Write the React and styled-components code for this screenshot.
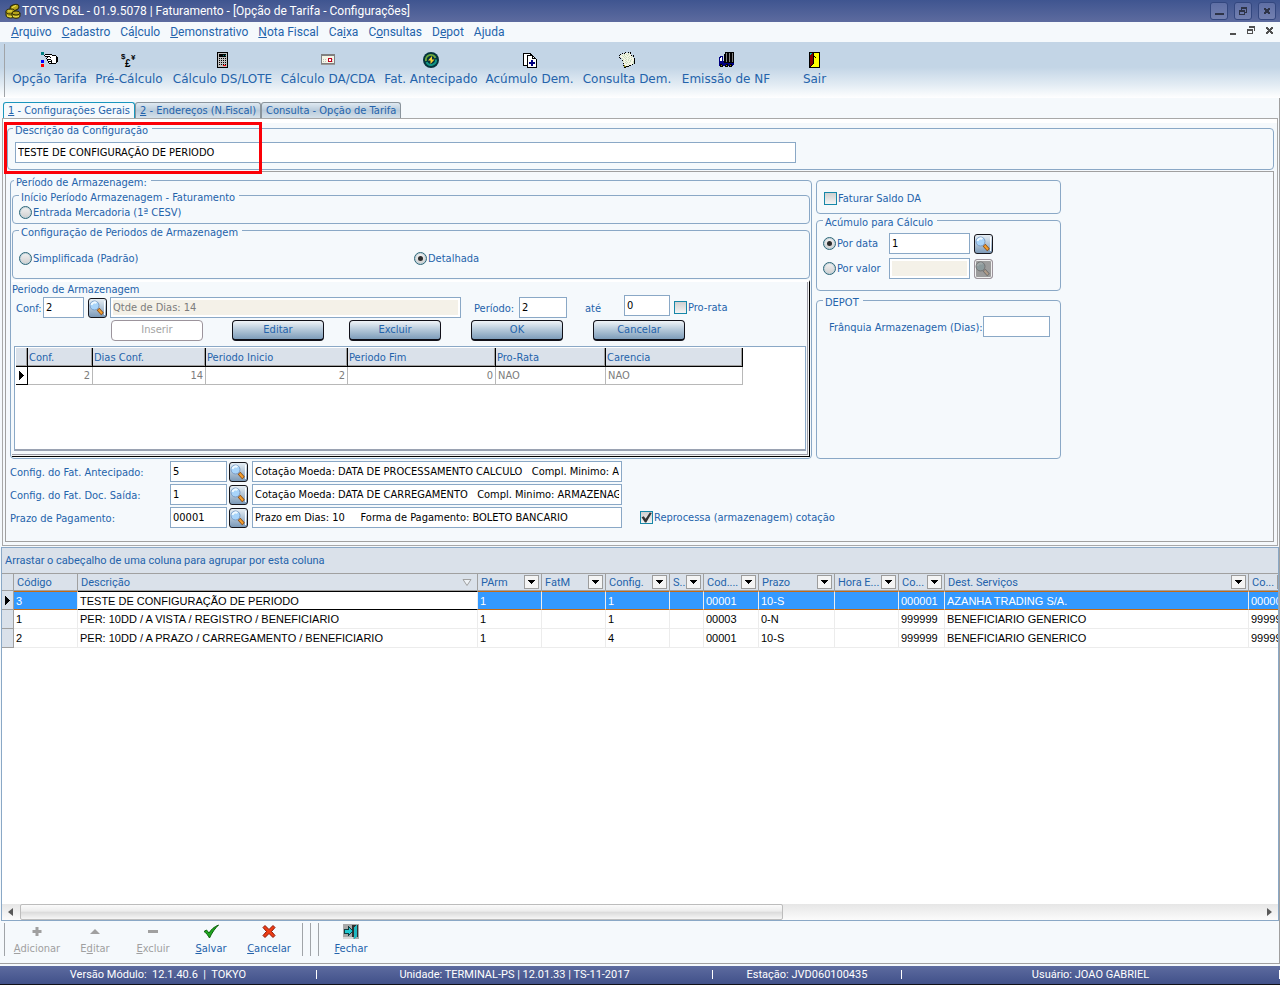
// src/App.jsx
import React, { useState } from 'react';
import styled, { createGlobalStyle, css } from 'styled-components';

const uiFont = `'DejaVu Sans Condensed', 'Noto Sans', sans-serif`;
const gridFont = `Roboto, 'Liberation Sans', sans-serif`;
const cellFont = `'Liberation Sans', Roboto, sans-serif`;
const captionFont = `Roboto, 'Noto Sans', sans-serif`;

const GlobalStyle = createGlobalStyle`
  * {
    box-sizing: border-box;
  }

  body {
    margin: 0;
    background-color: #f5f9fc;
    font-family: ${uiFont};
    font-size: 11px;
    color: #2463ab;
  }

  button, input {
    font: inherit;
    color: inherit;
    margin: 0;
  }
`;

const AppWindow = styled.div`
  display: flex;
  flex-direction: column;
  min-height: 100vh;
  border-bottom: 1px solid #101018;
`;

// Title bar
const TitleBar = styled.header`
  display: flex;
  align-items: center;
  height: 22px;
  padding: 0 4px 0 5px;
  gap: 6px;
  background: linear-gradient(#3f5590, #5d6b9f);
`;

const Title = styled.h1`
  flex: 1;
  display: flex;
  align-items: center;
  gap: 1px;
  margin: 0;
  font-family: ${captionFont};
  font-size: 12px;
  font-weight: 400;
  color: #fff;
  white-space: nowrap;
`;

const CaptionButton = styled.button`
  width: 18px;
  height: 18px;
  padding: 0;
  display: grid;
  place-items: center;
  border: 1px solid #33477f;
  border-radius: 3px;
  background: linear-gradient(#5f6fa5, #7380b0);
`;

// Menu
const MenuBar = styled.nav`
  display: flex;
  align-items: center;
  justify-content: space-between;
  height: 20px;
  padding: 0 4px 0 11px;
`;

const MenuList = styled.div`
  display: flex;
  gap: 10px;
`;

const MenuLink = styled.a`
  font-family: ${captionFont};
  font-size: 12px;
  line-height: 18px;
  color: #2463ab;
  text-decoration: none;
  white-space: nowrap;
`;

const MdiButtons = styled.div`
  display: flex;
  gap: 4px;
`;

const MdiButton = styled.button`
  width: 14px;
  height: 18px;
  padding: 0;
  border: none;
  background: none;
`;

// Toolbar
const Toolbar = styled.div`
  display: flex;
  align-items: stretch;
  height: 56px;
  padding: 2px 0 1px 4px;
  background: linear-gradient(#c3d5e6 45%, #e1ebf3 75%, #ffffff);
`;

const Grip = styled.span`
  width: 1px;
  margin-left: ${(props) => props.$before || 0}px;
  margin-right: ${(props) => props.$gap || 0}px;
  background-color: #a0a4a8;
`;

const ToolButton = styled.button`
  width: ${(props) => props.$width}px;
  display: flex;
  flex-direction: column;
  align-items: center;
  gap: 3px;
  padding: 8px 0 0;
  border: none;
  background: none;
  font-family: 'DejaVu Sans', sans-serif;
  font-size: 12px;
  line-height: 16px;
  white-space: nowrap;
`;

// Tabs
const Workspace = styled.main`
  flex: 1;
  display: flex;
  flex-direction: column;
  min-width: 0;
  border-right: 1px solid #a0a0a0;
`;

const TabList = styled.div`
  display: flex;
  align-items: flex-end;
  height: 20px;
  padding-left: 3px;
`;

const Tab = styled.button`
  height: 16px;
  padding: 1px 4px 0;
  border: 1px solid #8a949c;
  border-bottom: none;
  border-radius: 3px 3px 0 0;
  background: linear-gradient(#dfe9f1, #b9cbdb 50%, #d5e1ea);
  line-height: 14px;
  white-space: nowrap;

  ${(props) =>
    props.$active &&
    css`
      border-color: #1996bd;
      background: #f5f9fc;
    `}
`;

const TabPanel = styled.section`
  margin: 0 1px 1px 2px;
  padding: 3px 3px 3px 2px;
  border: 1px solid #a8a8a8;
  background: linear-gradient(#ffffff 4px, #f5f9fc 4px);
`;

const InnerPanel = styled.div`
  margin-top: 1px;
  padding: 2px 4px 13px;
  border: 1px solid #a0a0a0;
`;

// Group box
const Group = styled.fieldset`
  min-width: 0;
  margin: 0;
  padding: 0;
  border: 1px solid #8aa8c6;
  border-radius: 4px;
`;

const Legend = styled.legend`
  margin-left: ${(props) => props.$indent || 0}px;
  padding: 4px 4px 0 2px;
  line-height: 9px;
`;

const DescriptionGroup = styled(Group)`
  position: relative;
  margin-left: 2px;
  padding: 7px 7px 6px;
`;

const Highlight = styled.div`
  position: absolute;
  left: -4px;
  top: -13px;
  width: 258px;
  height: 52px;
  border: 3px solid #fb0007;
  pointer-events: none;
`;

const Columns = styled.div`
  display: flex;
  gap: 4px;
`;

const StorageGroup = styled(Group)`
  flex: 0 1 802px;
  padding: 2px 1px 1px;
`;

const RadioGroup = styled(Group)`
  display: flex;
  padding: ${(props) => props.$padding};
`;

const SideColumn = styled.div`
  flex: 0 0 245px;
  display: flex;
  flex-direction: column;
  padding-top: 6px;
`;

const InvoiceGroup = styled(Group)`
  height: 34px;
  padding: 11px 7px;
`;

const AccrualGroup = styled(Group)`
  padding: 6px 6px 11px;
`;

const DepotGroup = styled(Group)`
  flex: 1;
  margin-top: 3px;
  padding: 9px 6px 0;
`;

// Fields
const TextInput = styled.input`
  flex: 0 1 auto;
  min-width: 0;
  width: ${(props) => props.$width}px;
  height: 21px;
  padding: 0 2px;
  border: 1px solid #8aa8c6;
  border-radius: 0;
  outline: none;
  background-color: #fff;
  color: #000;

  &:disabled {
    border-color: #8aa8c6;
    background-color: #f4f1e8;
    box-shadow: inset 0 0 0 2px #fff;
    color: #7c7c7c;
  }
`;

const choice = css`
  appearance: none;
  flex: none;
  display: grid;
  place-items: center;
  width: 13px;
  height: 13px;
  outline: none;
`;

const Radio = styled.input`
  ${choice}
  border: 1px solid #2b6577;
  border-radius: 50%;
  background: linear-gradient(#f2f2f2, #cfcfcf);
  box-shadow: 0 0 0 1px #c3d3da inset;

  &:checked::before {
    content: '';
    width: 5px;
    height: 5px;
    border-radius: 50%;
    background-color: #2c2c2c;
  }
`;

const Check = styled.input`
  ${choice}
  border: 1px solid #1687a8;
  background: linear-gradient(#cfcfcf, #f4f4f4);

  &:checked::before {
    content: '';
    width: 11px;
    height: 11px;
    background-color: #333;
    clip-path: polygon(5% 48%, 25% 38%, 42% 62%, 80% 5%, 98% 8%, 48% 96%, 36% 96%);
  }
`;

const ChoiceLabel = styled.label`
  display: flex;
  align-items: center;
  gap: 1px;
  width: ${(props) => (props.$width ? `${props.$width}px` : 'auto')};
  margin-left: ${(props) => props.$indent || 0}px;
  line-height: 13px;
  white-space: nowrap;
`;

const FieldLabel = styled.label`
  flex: none;
  width: ${(props) => props.$width}px;
  padding-top: 2px;
  line-height: 17px;
  white-space: nowrap;
`;

const FieldStack = styled.div`
  display: flex;
  flex-direction: column;
  gap: ${(props) => props.$gap}px;
`;

const FieldRow = styled.div`
  display: flex;
  align-items: center;
  gap: ${(props) => props.$gap || 0}px;
  padding-left: ${(props) => props.$indent || 0}px;
`;

const LookupGap = styled.div`
  display: flex;
  margin-left: 4px;
`;

const LookupButton = styled.button`
  flex: none;
  width: 19px;
  height: 20px;
  padding: 0;
  border: 1px solid #16161c;
  border-radius: 3px;
  background: linear-gradient(#e6eef4, #7c9ab8);
  line-height: 0;

  &:disabled {
    border-color: #9c949c;
    background: #9c9c9c;
    box-shadow: inset 0 0 0 1px #f0f0f0;
  }
`;

// Storage period editor
const PeriodPanel = styled.div`
  margin-top: 1px;
  padding: 2px 3px 4px 0;
  border-top: 2px solid #fff;
  border-right: 1px solid #000;
  border-bottom: 1px solid #000;
  box-shadow: inset -1px -1px #f4f4f4, inset -2px -2px #9c9ca6;
`;

const PanelTitle = styled.div`
  line-height: 11px;
`;

const PeriodRow = styled.div`
  display: flex;
  align-items: flex-end;
  height: 23px;
  padding-left: 4px;
`;

const PeriodItem = styled.div`
  display: flex;
  align-items: center;
  align-self: ${(props) => (props.$raised ? 'flex-start' : 'flex-end')};
  gap: ${(props) => props.$gap || 0}px;
  height: 21px;
  margin-left: ${(props) => props.$indent || 0}px;
  min-width: 0;
`;

const ButtonRow = styled.div`
  display: grid;
  grid-template-columns: 121px 117px 122px 122px auto;
  margin: 2px 0 5px;
  padding-left: 99px;
`;

const ActionButton = styled.button`
  width: 92px;
  height: 21px;
  padding: 0 0 2px;
  border: 1px solid #101018;
  border-bottom-width: 2px;
  border-radius: 4px;
  background: linear-gradient(#f0f4f8, #b8cbdb 45%, #7e9dba);
  line-height: 17px;

  &:disabled {
    border: 1px solid #9c949c;
    background: #fff;
    color: #a4a4a4;
  }
`;

const PeriodTableBox = styled.div`
  min-height: 105px;
  margin: 0 0 1px 2px;
  padding: 1px;
  border: 1px solid #8aa8c6;
  border-bottom: 2px solid #9aa2b2;
  background-color: #fff;
  overflow: hidden;
`;

const PeriodTable = styled.table`
  width: 727px;
  table-layout: fixed;
  border-collapse: separate;
  border-spacing: 0;

  th,
  td {
    height: 19px;
    padding: 1px 1px 0;
    font-weight: 400;
    line-height: 16px;
    text-align: left;
    white-space: nowrap;
  }

  th {
    border-right: 1px solid #000;
    border-bottom: 1px solid #000;
    background-color: #dae1ea;
    box-shadow: inset -1px -1px #a0a0a0;
  }

  td {
    height: 18px;
    padding: 0 2px;
    border-right: 1px solid #b8b8b8;
    border-bottom: 1px solid #b8b8b8;
    color: #7c7c7c;
  }

  td:first-child {
    padding: 0 3px;
    border-right: 1px solid #000;
    border-bottom: 1px solid #000;
    line-height: 0;
  }

  td.number {
    text-align: right;
  }
`;

const BottomFields = styled.div`
  margin-top: 2px;
`;

// Options grid
const GridBox = styled.section`
  flex: 1;
  display: flex;
  flex-direction: column;
  min-width: 0;
  margin-left: 1px;
  border: 1px solid #8aa8c6;
  background-color: #fff;
  font-family: ${gridFont};
`;

const GroupBand = styled.div`
  padding: 0 3px;
  background-color: #dae1ea;
  line-height: 25px;
`;

const GridScroll = styled.div`
  flex: 1;
  overflow: hidden;
`;

const OptionTable = styled.table`
  width: 1293px;
  table-layout: fixed;
  border-collapse: separate;
  border-spacing: 0;
`;

const HeaderCell = styled.th`
  height: 18px;
  padding: 0 2px 0 3px;
  border-top: 1px solid #a0a0a0;
  border-bottom: 1px solid #a0a0a0;
  border-right: 1px solid #a0a0a0;
  background-color: #dae1ea;
  font-weight: 400;
  text-align: left;
  white-space: nowrap;
`;

const HeaderContent = styled.div`
  display: flex;
  align-items: center;
  justify-content: space-between;
  height: 16px;
`;

const FilterButton = styled.button`
  flex: none;
  display: grid;
  place-items: center;
  width: 15px;
  height: 14px;
  padding: 0;
  border: 1px solid #9c9c9c;
  background-color: #f4f4f4;
`;

const BodyCell = styled.td`
  height: 19px;
  padding: 0 2px;
  border-right: 1px solid #ececec;
  border-bottom: 1px solid #ececec;
  font-family: ${cellFont};
  color: #000;
  line-height: 16px;
  white-space: nowrap;

  ${(props) =>
    props.$selected &&
    css`
      border-top: 1px solid #c46a14;
      border-bottom: 1px solid #c46a14;
      background-color: #3399ff;
      color: #fff;
    `}

  ${(props) =>
    props.$focused &&
    css`
      border-top-color: #000;
      border-bottom-color: #000;
      background-color: #fff;
      color: #000;
    `}
`;

const IndicatorCell = styled.td`
  padding: 0 0 0 3px;
  border-right: 1px solid #a0a0a0;
  border-bottom: 1px solid #a0a0a0;
  background-color: #dae1ea;
  line-height: 0;
`;

const ScrollBar = styled.div`
  display: flex;
  align-items: stretch;
  height: 16px;
  background: linear-gradient(#e6e6e6, #fbfbfb);
`;

const ScrollArrow = styled.button`
  width: 17px;
  padding: 0;
  border: none;
  background: none;
`;

const ScrollTrack = styled.div`
  flex: 1;
  display: grid;
  grid-template-columns: 8fr 5fr;
  padding: 0 1px;
`;

const ScrollThumb = styled.div`
  border: 1px solid #bcbcbc;
  border-radius: 2px;
  background: linear-gradient(#fbfbfb, #ececec 45%, #dadada 50%, #f6f6f6);
`;

// Footer
const ActionBar = styled.div`
  display: flex;
  height: 43px;
  padding: 2px 0 7px 4px;
  border-bottom: 1px solid #a0a0a0;
`;

const CrudButton = styled.button`
  width: 58px;
  display: flex;
  flex-direction: column;
  align-items: center;
  gap: 2px;
  padding: 1px 0 0;
  border: none;
  background: none;
  line-height: 15px;

  &:disabled {
    color: #a0a0a0;
  }
`;

const StatusBar = styled.footer`
  display: grid;
  grid-template-columns: 317fr 396fr 189fr 378fr;
  height: 18px;
  margin-top: 2px;
  background: linear-gradient(#5d6b9f, #41518a);
  font-family: ${gridFont};
  color: #fff;
`;

const StatusCell = styled.div`
  display: flex;
  align-items: center;
  padding-bottom: 1px;
  text-align: center;
  line-height: 17px;
  white-space: pre;

  span {
    flex: 1;
  }

  &::after {
    content: '';
    width: 1px;
    height: 9px;
    background-color: #fff;
  }
`;

// Icons
function PixelIcon({ rows, colors }) {
  const width = Math.max(...rows.map((row) => row.length));
  return (
    <svg width={width} height={rows.length} shapeRendering="crispEdges" aria-hidden="true">
      {rows.map((row, y) =>
        [...row].map((key, x) =>
          colors[key] ? <rect key={`${x}-${y}`} x={x} y={y} width="1" height="1" fill={colors[key]} /> : null
        )
      )}
    </svg>
  );
}

const palette = {
  K: '#000000',
  W: '#ffffff',
  T: '#008080',
  B: '#0000ff',
  R: '#ff0000',
  N: '#000080',
  G: '#808080',
  L: '#c0c0c0',
  Y: '#ffff00',
  M: '#800000',
  C: '#00c0c0',
  P: '#f4f4e4',
  E: '#c8dcc0',
  O: '#8a8a20',
  D: '#505050',
  S: '#2e3448',
  X: '#9a9a9a',
  Q: '#c00020',
};

const pixelRows = {
  hand: [
    'TTT',
    'TTT',
    'TTT.KKKKKKK',
    '...KWWWWWWWKKKK',
    '....KKKKKWWWWWWK',
    '......KWWKWWWWWKK',
    '.....KWWWWWWWWWKK',
    '......KKKKWWWWWKK',
    'BBB...KWWWKWWWWKK',
    'BBB....KKKKWWWWKK',
    'BBB....KWWKWWWWK',
    '........KKKKKKK',
    'RRR',
    'RRR',
    'RRR',
    '',
  ],
  calculator: [
    'KKKKKKKKKKK',
    'KLLLLLLLLLK',
    'KLKKKKKKKLK',
    'KLKKKKTKTLK',
    'KLKKKKKKKLK',
    'KLLLLLLLLLK',
    'KLKLKLKLKLK',
    'KLLLLLLLLLK',
    'KLKLKLKLKLK',
    'KLLLLLLLLLK',
    'KLKLKLKLKLK',
    'KLLLLLLLLLK',
    'KLKLKLKLKLK',
    'KLLLLLRRRLK',
    'KLLLLLLLLLK',
    'KKKKKKKKKKK',
  ],
  calendar: [
    '',
    '',
    'GGGGGGGGGGGGGG',
    'GGGGGGGGGGGGGG',
    'GPPPPPPPPPPPPG',
    'GPPPPPPPPPPPPG',
    'GPPPPPPQQQQPPG',
    'GPLPLPPQWWQLPG',
    'GPPPPPPQWWQPPG',
    'GPLPLPPQQQQLPG',
    'GPPPPPPPPPPPPG',
    'GGGGGGGGGGGGGG',
    'XXXXXXXXXXXXXX',
    '',
    '',
    '',
  ],
  documents: [
    '',
    'KKKKKKKK',
    'KWWWWWWKK',
    'KWWWKKKKKK',
    'KWWWKWWWWKK',
    'KWWWKWWWWKWK',
    'KWWWKWWWWKKKK',
    'KWWWKWWWWWWWWK',
    'KWWWKWWWNNWWWK',
    'KWWWKWWWNNWWWK',
    'KWWWKWNNNNNNWK',
    'KWWWKWNNNNNNWK',
    'KWWWKWWWNNWWWK',
    'KKKKKWWWNNWWWK',
    '....KWWWWWWWWK',
    '....KKKKKKKKKK',
  ],
  paper: [
    '......K..K.K',
    '...K.KPPPEPK',
    '.K.PPEPEPEPP',
    'KPPEPEPPEPPPK.K',
    '.PPPEPEPPPEPPEK',
    'K.PPPEPEPEPPEP.',
    '.K.EPPEPPPEPPPPK',
    '...PEPPEPEPPEPPK',
    '...KPPEPPEPEPPPK',
    '....EPPEPPPEPPEK',
    '....PPEPEPEPPPEK',
    '....KPPEPPPPPPEK',
    '.....PPPPEPPPK',
    '....KOPPPPKK',
    '.....OOKKK',
    '.....KK',
  ],
  truck: [
    '......KKKKKKKKK',
    '......KGKKGKKGK',
    '.....KKGKKGKKGK',
    '.....KKGKKGKKGK',
    '.NNN.KKGKKGKKGK',
    'NNWN.KKGKKGKKGK',
    'NWWN.KKGKKGKKGK',
    'NWWN.KKGKKGKKGK',
    'NWWN.KKGKKGKKGK',
    'NNNNNKKGKKGKKGK',
    'NNNNNKKKKKKKKKK',
    'NNNNNNNNNNNNNNN',
    'NKKNNNNKKNNKKNN',
    'NKOKNNKOKNKOKN',
    '.KKK..KKK.KKK',
    '',
  ],
  door: [
    'KKKKKKKKKKK',
    'KCCMKYYYYYK',
    'KCMMKYYYYYK',
    'KMMMKYYYYYK',
    'KMMMKKYYYYK',
    'KMMMKYKYYYK',
    'KMMMKYYYYYK',
    'KMMMKYYYYYK',
    'KMMMKYYYYYK',
    'KMMMKYYYYYK',
    'KMMMKYYYYYK',
    'KMMMKYYYYYK',
    'KMMKYYYYYYK',
    'KMKYYYYYYYK',
    'KKYYYYYYYYK',
    'KKKKKKKKKKK',
  ],
  arrow: ['K', 'KK', 'KKK', 'KKKK', 'KKKKK', 'KKKK', 'KKK', 'KK', 'K'],
  drop: ['KKKKKKK', '.KKKKK', '..KKK', '...K'],
  minimize: ['', '', '', '', '', '', 'SSSSSSSSS', 'SSSSSSSSS'],
  restore: ['..SSSSSS', '..SSSSSS', '..S....S', 'SSSSSS.S', 'SSSSSS.S', 'S....SSS', 'S....S', 'SSSSSS'],
  close: ['SS..SS', 'SSSSSS', '.SSSS', '.SSSS', 'SSSSSS', 'SS..SS'],
  mdiMinimize: ['', '', '', '', 'DDDDDD', 'DDDDDD', ''],
  mdiRestore: ['..DDDDDD', '..DDDDDD', '.......D', 'DDDDDD.D', 'DDDDDD.D', 'D....D', 'D....D', 'DDDDDD', '', ''],
  mdiClose: ['DD...DD', 'DDD.DDD', '.DDDDD', '..DDD', '.DDDDD', 'DDD.DDD', 'DD...DD', '', ''],
};

const Pixel = ({ name }) => <PixelIcon rows={pixelRows[name]} colors={palette} />;

const CoinsIcon = () => (
  <svg width="16" height="16" viewBox="0 0 16 16" aria-hidden="true">
    <g fill="#b5a31a" stroke="#2c2a06">
      <ellipse cx="9.500" cy="4.500" rx="4.500" ry="3" transform="rotate(-20 9.500 4.500)" />
      <path d="M1 8.500V12c0 4 9 4 9 0V8.500z" />
      <ellipse cx="5.500" cy="8.500" rx="4.500" ry="2.500" />
      <path d="M7 10v3c0 3 8 3 8 0v-3z" />
      <ellipse cx="11" cy="10" rx="4" ry="2" />
    </g>
    <path d="M2 12.500c2 1.500 4 1.500 5 1M8 13c2 1.200 4 1 6 0M7 4.500l4-2M3 8h4" stroke="#f4ea50" fill="none" />
  </svg>
);

const MoneyIcon = () => (
  <svg width="16" height="16" viewBox="0 0 16 16" fill="#000" fontFamily="Liberation Sans" fontWeight="700" aria-hidden="true">
    <text x="0" y="7" fontSize="8">$</text>
    <text x="4" y="15" fontSize="10">£</text>
    <text x="10" y="8" fontSize="8">¥</text>
  </svg>
);

const CycleIcon = () => (
  <svg width="16" height="16" viewBox="0 0 16 16" aria-hidden="true">
    <circle cx="8" cy="8" r="8" fill="#04343c" />
    <path d="M3 9a5 5 0 0 1 9.500-3" stroke="#6aa83c" strokeWidth="2" fill="none" />
    <path d="M13 7.500a5 5 0 0 1-9.500 2.500" stroke="#129484" strokeWidth="2" fill="none" />
    <circle cx="8" cy="8" r="3.500" fill="#04343c" />
    <path d="M9 4L5 8.500h2.500V12L11.500 7.500H9z" fill="#f8d030" />
  </svg>
);

const SearchIcon = ({ muted }) => (
  <svg width="17" height="18" viewBox="0 0 17 18" aria-hidden="true">
    {!muted && <path d="M15.500 2v14" stroke="#fff" />}
    <path d="M9 10l4.500 5" stroke={muted ? '#6c6c6c' : '#8a4a10'} strokeWidth="3.500" />
    <path d="M9.500 10.500l3.500 4" stroke={muted ? '#b09c88' : '#f4a030'} strokeWidth="2" />
    <circle cx="5.500" cy="6.500" r="4.500" fill={muted ? '#8c9a9c' : '#a8d4fa'} stroke={muted ? '#747474' : '#7c9cc4'} />
    <path d="M2.500 6a3.200 3.200 0 0 1 5-2" stroke={muted ? '#a0a8a8' : '#f0faff'} strokeWidth="2" fill="none" />
  </svg>
);

const PlusIcon = () => (
  <svg width="16" height="15" viewBox="0 0 16 15" aria-hidden="true">
    <path d="M8 3v9M3.500 7.500h9" stroke="#a0a0a0" strokeWidth="3" />
  </svg>
);

const UpIcon = () => (
  <svg width="16" height="15" viewBox="0 0 16 15" aria-hidden="true">
    <path d="M8 5l5 5H3z" fill="#a0a0a0" />
  </svg>
);

const MinusIcon = () => (
  <svg width="16" height="15" viewBox="0 0 16 15" aria-hidden="true">
    <path d="M3 7.500h10" stroke="#a0a0a0" strokeWidth="3" />
  </svg>
);

const SaveIcon = () => (
  <svg width="16" height="15" viewBox="0 0 16 15" aria-hidden="true">
    <path d="M1 7.500L3.500 6 6 9C8.500 5 11 3 15.500 1 12 4.500 9 8.500 6.500 14 5 11.500 3.500 9 1 7.500z" fill="#1fa81f" stroke="#0c600c" />
  </svg>
);

const CancelIcon = () => (
  <svg width="16" height="15" viewBox="0 0 16 15" aria-hidden="true">
    <path
      d="M4 1.500l4 4 4-4 2 2-3.500 4L14 11.500l-2 2-4-4-4 4-2-2 3.500-4L2 3.500z"
      fill="#ee3c14"
      stroke="#8c1404"
    />
  </svg>
);

const ExitIcon = () => (
  <svg width="16" height="15" viewBox="0 0 16 15" shapeRendering="crispEdges" aria-hidden="true">
    <path d="M0 0h16v15H0z" fill="#a8a8a8" />
    <path d="M9 1h6v12H9z" fill="#303030" />
    <path d="M11 3l3-2v12l-3 2z" fill="#20b8c0" />
    <path d="M0 13h10v2H0z" fill="#d8d8d8" />
    <path d="M1 5h4V2l5 5-5 5V9H1z" fill="#20c8d0" stroke="#103c40" />
  </svg>
);

const SortIcon = () => (
  <svg width="16" height="7" viewBox="0 0 16 7" aria-hidden="true">
    <path d="M4 .5h8L8 6.500z" fill="#eef2f6" stroke="#a0a0a0" />
  </svg>
);

const ScrollIcon = ({ right }) => (
  <svg width="5" height="8" viewBox="0 0 5 8" aria-hidden="true">
    <path d={right ? 'M0 0l5 4-5 4z' : 'M5 0L0 4l5 4z'} fill="#585858" />
  </svg>
);

// "_" before a letter marks its access key
function Mnemonic({ text }) {
  const at = text.indexOf('_');
  if (at < 0) return <span>{text}</span>;
  return (
    <span>
      {text.slice(0, at)}
      <u>{text[at + 1]}</u>
      {text.slice(at + 2)}
    </span>
  );
}

const menus = [
  '_Arquivo',
  '_Cadastro',
  'Cá_lculo',
  '_Demonstrativo',
  '_Nota Fiscal',
  'Ca_ixa',
  'C_onsultas',
  'D_epot',
  'A_juda',
];

const tools = [
  { label: 'Opção Tarifa', width: 83, icon: <Pixel name="hand" /> },
  { label: 'Pré-Cálculo', width: 76, icon: <MoneyIcon /> },
  { label: 'Cálculo DS/LOTE', width: 111, icon: <Pixel name="calculator" /> },
  { label: 'Cálculo DA/CDA', width: 100, icon: <Pixel name="calendar" /> },
  { label: 'Fat. Antecipado', width: 106, icon: <CycleIcon /> },
  { label: 'Acúmulo Dem.', width: 91, icon: <Pixel name="documents" /> },
  { label: 'Consulta Dem.', width: 104, icon: <Pixel name="paper" /> },
  { label: 'Emissão de NF', width: 94, icon: <Pixel name="truck" /> },
  { label: 'Sair', width: 83, icon: <Pixel name="door" /> },
];

const tabs = ['_1 - Configurações Gerais', '_2 - Endereços (N.Fiscal)', 'Consulta - Opção de Tarifa'];

const columns = [
  { label: 'Código', width: 64, plain: true },
  { label: 'Descrição', width: 400, sorted: true, plain: true },
  { label: 'PArm', width: 64 },
  { label: 'FatM', width: 64 },
  { label: 'Config.', width: 64 },
  { label: 'S..', width: 34 },
  { label: 'Cod....', width: 55 },
  { label: 'Prazo', width: 76 },
  { label: 'Hora E...', width: 64 },
  { label: 'Co...', width: 46 },
  { label: 'Dest. Serviços', width: 304 },
  { label: 'Co...', width: 46 },
];

const options = [
  ['3', 'TESTE DE CONFIGURAÇÃO DE PERIODO', '1', '', '1', '', '00001', '10-S', '', '000001', 'AZANHA TRADING S/A.', '000001'],
  ['1', 'PER: 10DD / A VISTA / REGISTRO / BENEFICIARIO', '1', '', '1', '', '00003', '0-N', '', '999999', 'BENEFICIARIO GENERICO', '999999'],
  ['2', 'PER: 10DD / A PRAZO / CARREGAMENTO / BENEFICIARIO', '1', '', '4', '', '00001', '10-S', '', '999999', 'BENEFICIARIO GENERICO', '999999'],
];

const crud = [
  { label: '_Adicionar', icon: <PlusIcon />, disabled: true },
  { label: 'E_ditar', icon: <UpIcon />, disabled: true },
  { label: '_Excluir', icon: <MinusIcon />, disabled: true },
  { label: '_Salvar', icon: <SaveIcon /> },
  { label: '_Cancelar', icon: <CancelIcon /> },
];

const lookups = [
  { id: 'antecipado', label: 'Config. do Fat. Antecipado:', code: '5', text: 'Cotação Moeda: DATA DE PROCESSAMENTO CALCULO   Compl. Minimo: ARMAZENAGEM' },
  { id: 'saida', label: 'Config. do Fat. Doc. Saída:', code: '1', text: 'Cotação Moeda: DATA DE CARREGAMENTO   Compl. Minimo: ARMAZENAGEM' },
  { id: 'prazo', label: 'Prazo de Pagamento:', code: '00001', text: 'Prazo em Dias: 10     Forma de Pagamento: BOLETO BANCARIO' },
];

function PeriodEditor() {
  return (
    <PeriodPanel>
      <PanelTitle>Periodo de Armazenagem</PanelTitle>
      <PeriodRow>
        <PeriodItem>
          <FieldLabel $width={27} htmlFor="conf">Conf:</FieldLabel>
          <TextInput id="conf" $width={41} defaultValue="2" />
        </PeriodItem>
        <PeriodItem $indent={4} $gap={3}>
          <LookupButton type="button" aria-label="Pesquisar configuração"><SearchIcon /></LookupButton>
          <TextInput aria-label="Quantidade de dias" $width={351} disabled defaultValue="Qtde de Dias: 14" />
        </PeriodItem>
        <PeriodItem $indent={13}>
          <FieldLabel $width={45} htmlFor="from">Período:</FieldLabel>
          <TextInput id="from" $width={48} defaultValue="2" />
        </PeriodItem>
        <PeriodItem $indent={18}>
          <FieldLabel $width={39} htmlFor="to">até</FieldLabel>
        </PeriodItem>
        <PeriodItem $raised>
          <TextInput id="to" $width={46} defaultValue="0" />
        </PeriodItem>
        <PeriodItem $indent={4}>
          <ChoiceLabel>
            <Check type="checkbox" />
            Pro-rata
          </ChoiceLabel>
        </PeriodItem>
      </PeriodRow>
      <ButtonRow>
        <ActionButton type="button" disabled>Inserir</ActionButton>
        <ActionButton type="button">Editar</ActionButton>
        <ActionButton type="button">Excluir</ActionButton>
        <ActionButton type="button">OK</ActionButton>
        <ActionButton type="button">Cancelar</ActionButton>
      </ButtonRow>
      <PeriodTableBox>
        <PeriodTable>
          <colgroup>
            {[12, 65, 113, 142, 148, 110, 137].map((width, i) => (
              <col key={i} width={width} />
            ))}
          </colgroup>
          <thead>
            <tr>
              <th aria-label="Atual" />
              {['Conf.', 'Dias Conf.', 'Periodo Inicio', 'Periodo Fim', 'Pro-Rata', 'Carencia'].map((label) => (
                <th key={label}>{label}</th>
              ))}
            </tr>
          </thead>
          <tbody>
            <tr>
              <td><Pixel name="arrow" /></td>
              <td className="number">2</td>
              <td className="number">14</td>
              <td className="number">2</td>
              <td className="number">0</td>
              <td>NAO</td>
              <td>NAO</td>
            </tr>
          </tbody>
        </PeriodTable>
      </PeriodTableBox>
    </PeriodPanel>
  );
}

function OptionGrid() {
  const [selected, setSelected] = useState(0);

  return (
    <GridBox>
      <GroupBand>Arrastar o cabeçalho de uma coluna para agrupar por esta coluna</GroupBand>
      <GridScroll>
        <OptionTable>
          <colgroup>
            <col width="12" />
            {columns.map((column, i) => (
              <col key={i} width={column.width} />
            ))}
          </colgroup>
          <thead>
            <tr>
              <HeaderCell aria-label="Atual" />
              {columns.map((column, i) => (
                <HeaderCell key={i}>
                  <HeaderContent>
                    {column.label}
                    {column.sorted && <SortIcon />}
                    {!column.plain && (
                      <FilterButton type="button" aria-label={`Filtrar ${column.label}`}>
                        <Pixel name="drop" />
                      </FilterButton>
                    )}
                  </HeaderContent>
                </HeaderCell>
              ))}
            </tr>
          </thead>
          <tbody>
            {options.map((row, r) => (
              <tr key={row[0]} onClick={() => setSelected(r)}>
                <IndicatorCell>{selected === r && <Pixel name="arrow" />}</IndicatorCell>
                {row.map((value, c) => (
                  <BodyCell key={c} $selected={selected === r} $focused={selected === r && c === 1}>
                    {value}
                  </BodyCell>
                ))}
              </tr>
            ))}
          </tbody>
        </OptionTable>
      </GridScroll>
      <ScrollBar>
        <ScrollArrow type="button" aria-label="Rolar para a esquerda"><ScrollIcon /></ScrollArrow>
        <ScrollTrack>
          <ScrollThumb />
        </ScrollTrack>
        <ScrollArrow type="button" aria-label="Rolar para a direita"><ScrollIcon right /></ScrollArrow>
      </ScrollBar>
    </GridBox>
  );
}

function App() {
  const [tab, setTab] = useState(0);

  return (
    <AppWindow>
      <GlobalStyle />
      <TitleBar>
        <Title>
          <CoinsIcon />
          TOTVS D&amp;L - 01.9.5078 | Faturamento - [Opção de Tarifa - Configurações]
        </Title>
        <CaptionButton type="button" aria-label="Minimizar"><Pixel name="minimize" /></CaptionButton>
        <CaptionButton type="button" aria-label="Restaurar"><Pixel name="restore" /></CaptionButton>
        <CaptionButton type="button" aria-label="Fechar"><Pixel name="close" /></CaptionButton>
      </TitleBar>
      <MenuBar>
        <MenuList>
          {menus.map((menu) => (
            <MenuLink key={menu} href="#">
              <Mnemonic text={menu} />
            </MenuLink>
          ))}
        </MenuList>
        <MdiButtons>
          <MdiButton type="button" aria-label="Minimizar janela"><Pixel name="mdiMinimize" /></MdiButton>
          <MdiButton type="button" aria-label="Restaurar janela"><Pixel name="mdiRestore" /></MdiButton>
          <MdiButton type="button" aria-label="Fechar janela"><Pixel name="mdiClose" /></MdiButton>
        </MdiButtons>
      </MenuBar>
      <Toolbar>
        <Grip $gap={3} />
        {tools.map((tool) => (
          <ToolButton key={tool.label} type="button" $width={tool.width}>
            {tool.icon}
            {tool.label}
          </ToolButton>
        ))}
      </Toolbar>
      <Workspace>
        <TabList role="tablist">
          {tabs.map((label, i) => (
            <Tab key={label} type="button" role="tab" aria-selected={tab === i} $active={tab === i} onClick={() => setTab(i)}>
              <Mnemonic text={label} />
            </Tab>
          ))}
        </TabList>
        <TabPanel>
          <DescriptionGroup>
            <Legend $indent={-2}>Descrição da Configuração</Legend>
            <FieldRow>
              <TextInput aria-label="Descrição da Configuração" $width={781} defaultValue="TESTE DE CONFIGURAÇÃO DE PERIODO" />
            </FieldRow>
            <Highlight />
          </DescriptionGroup>
          <InnerPanel>
            <Columns>
              <StorageGroup>
                <Legend $indent={2}>Período de Armazenagem:</Legend>
                <RadioGroup $padding="4px 6px">
                  <Legend>Início Período Armazenagem - Faturamento</Legend>
                  <ChoiceLabel>
                    <Radio type="radio" name="start" />
                    Entrada Mercadoria (1ª CESV)
                  </ChoiceLabel>
                </RadioGroup>
                <RadioGroup $padding="15px 6px 13px">
                  <Legend>Configuração de Periodos de Armazenagem</Legend>
                  <ChoiceLabel $width={395}>
                    <Radio type="radio" name="mode" />
                    Simplificada (Padrão)
                  </ChoiceLabel>
                  <ChoiceLabel>
                    <Radio type="radio" name="mode" defaultChecked />
                    Detalhada
                  </ChoiceLabel>
                </RadioGroup>
                <PeriodEditor />
              </StorageGroup>
              <SideColumn>
                <InvoiceGroup>
                  <ChoiceLabel>
                    <Check type="checkbox" />
                    Faturar Saldo DA
                  </ChoiceLabel>
                </InvoiceGroup>
                <AccrualGroup>
                  <Legend>Acúmulo para Cálculo</Legend>
                  <FieldStack $gap={4}>
                    <FieldRow>
                      <ChoiceLabel $width={66}>
                        <Radio type="radio" name="accrual" defaultChecked />
                        Por data
                      </ChoiceLabel>
                      <TextInput aria-label="Data" $width={81} defaultValue="1" />
                      <LookupGap>
                        <LookupButton type="button" aria-label="Pesquisar data"><SearchIcon /></LookupButton>
                      </LookupGap>
                    </FieldRow>
                    <FieldRow>
                      <ChoiceLabel $width={66}>
                        <Radio type="radio" name="accrual" />
                        Por valor
                      </ChoiceLabel>
                      <TextInput aria-label="Valor" $width={81} disabled />
                      <LookupGap>
                        <LookupButton type="button" aria-label="Pesquisar valor" disabled><SearchIcon muted /></LookupButton>
                      </LookupGap>
                    </FieldRow>
                  </FieldStack>
                </AccrualGroup>
                <DepotGroup>
                  <Legend>DEPOT</Legend>
                  <FieldRow $indent={6}>
                    <FieldLabel $width={154} htmlFor="franquia">Frânquia Armazenagem (Dias):</FieldLabel>
                    <TextInput id="franquia" $width={67} />
                  </FieldRow>
                </DepotGroup>
              </SideColumn>
            </Columns>
            <BottomFields>
              <FieldStack $gap={2}>
                {lookups.map((lookup) => (
                  <FieldRow key={lookup.id}>
                    <FieldLabel $width={160} htmlFor={lookup.id}>{lookup.label}</FieldLabel>
                    <FieldRow $gap={2}>
                      <TextInput id={lookup.id} $width={57} defaultValue={lookup.code} />
                      <LookupButton type="button" aria-label={`Pesquisar ${lookup.label}`}><SearchIcon /></LookupButton>
                    </FieldRow>
                    <LookupGap>
                      <TextInput aria-label={`Resumo ${lookup.label}`} $width={370} readOnly defaultValue={lookup.text} />
                    </LookupGap>
                    {lookup.id === 'prazo' && (
                      <ChoiceLabel $indent={18}>
                        <Check type="checkbox" defaultChecked />
                        Reprocessa (armazenagem) cotação
                      </ChoiceLabel>
                    )}
                  </FieldRow>
                ))}
              </FieldStack>
            </BottomFields>
          </InnerPanel>
        </TabPanel>
        <OptionGrid />
        <ActionBar>
          <Grip $gap={3} />
          {crud.map((item) => (
            <CrudButton key={item.label} type="button" disabled={item.disabled}>
              {item.icon}
              <Mnemonic text={item.label} />
            </CrudButton>
          ))}
          <Grip $before={4} $gap={7} />
          <Grip $gap={7} />
          <Grip $gap={3} />
          <CrudButton type="button">
            <ExitIcon />
            <Mnemonic text="_Fechar" />
          </CrudButton>
        </ActionBar>
      </Workspace>
      <StatusBar>
        <StatusCell><span>{'Versão Módulo:  12.1.40.6  |  TOKYO'}</span></StatusCell>
        <StatusCell><span>Unidade: TERMINAL-PS | 12.01.33 | TS-11-2017</span></StatusCell>
        <StatusCell><span>Estação: JVD060100435</span></StatusCell>
        <StatusCell><span>Usuário: JOAO GABRIEL</span></StatusCell>
      </StatusBar>
    </AppWindow>
  );
}

export default App;
